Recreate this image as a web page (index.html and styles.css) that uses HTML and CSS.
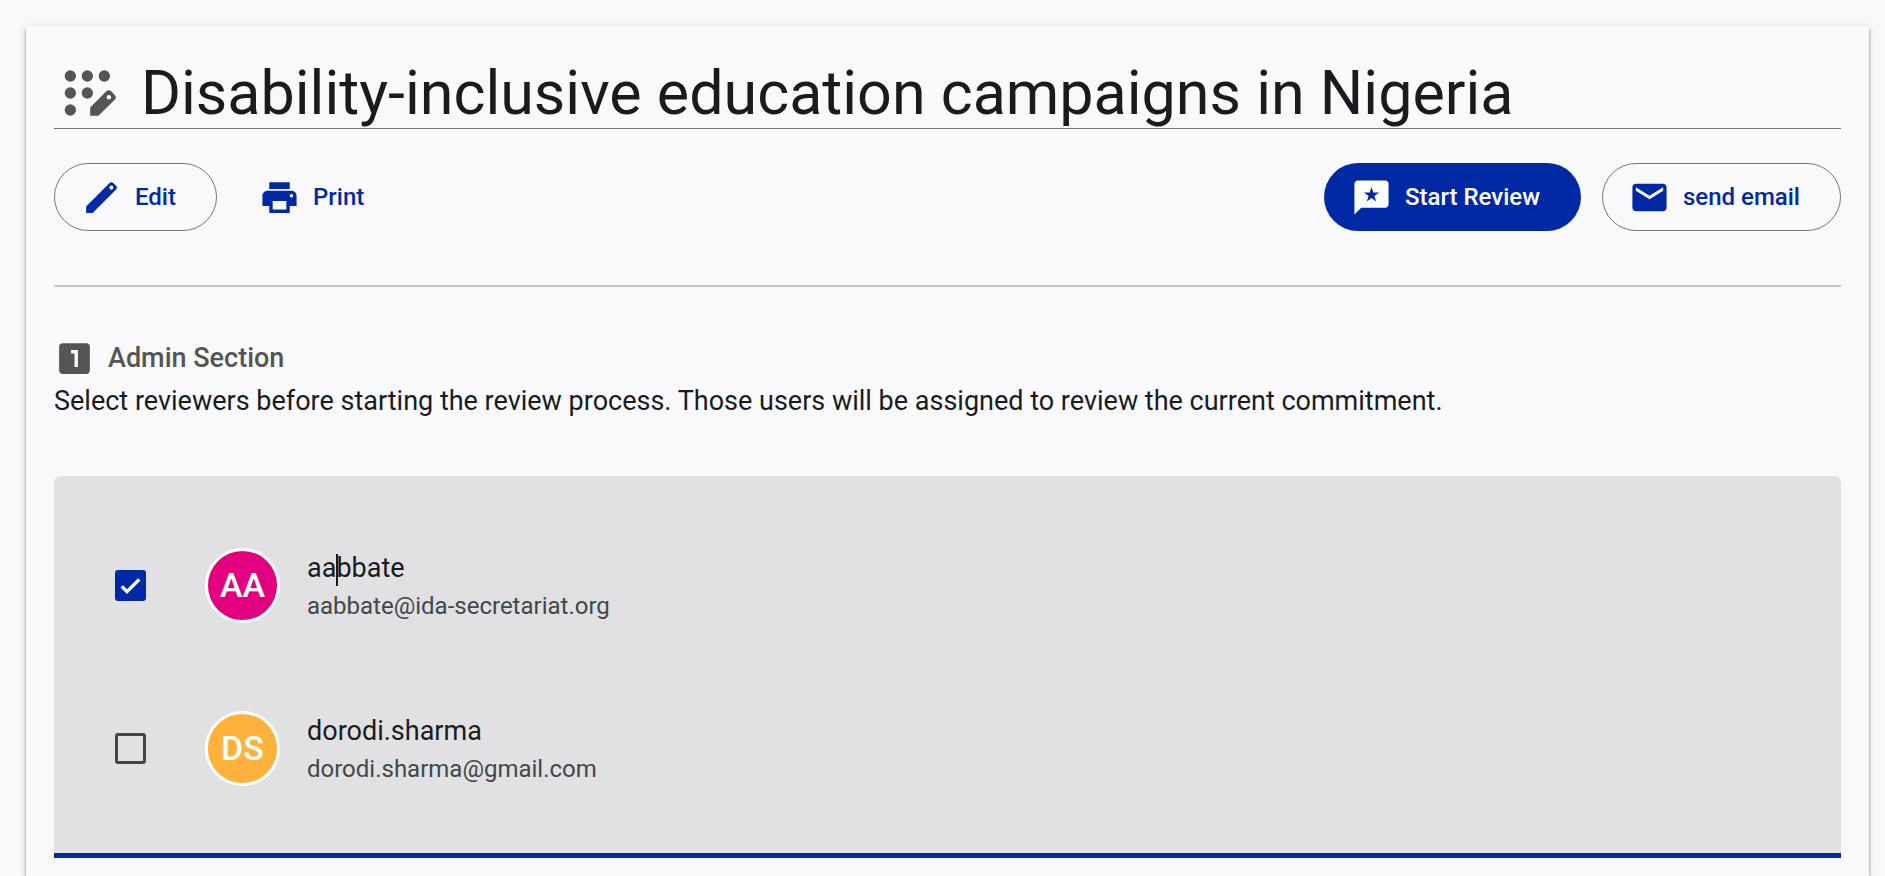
FILE: index.html
```html
<!DOCTYPE html>
<html lang="en">
<head>
  <meta charset="UTF-8">
  <meta name="viewport" content="width=device-width, initial-scale=1">
  <title>Disability-inclusive education campaigns in Nigeria</title>
  <link rel="stylesheet" href="styles.css">
</head>
<body>
  <main class="card">
    <h1 class="title">
      <svg class="title-icon" viewBox="0 -2 24 24" aria-hidden="true">
        <circle cx="4" cy="4" r="2"/>
        <circle cx="10" cy="4" r="2"/>
        <circle cx="16" cy="4" r="2"/>
        <circle cx="4" cy="10" r="2"/>
        <circle cx="10" cy="10" r="2"/>
        <circle cx="4" cy="16" r="2"/>
        <path fill-rule="evenodd" d="M11 15.1V18h2.9l5.7-5.5c.6-.6.6-1.3 0-1.900l-1.100-1.100c-.6-.6-1.300-.6-1.900 0zM17.600 10.700a.8.8 0 1 1 0 1.600.8.8 0 0 1 0-1.600z"/>
      </svg>
      <span>Disability-inclusive education campaigns in Nigeria</span>
    </h1>

    <div class="actions">
      <button type="button" class="btn btn-outlined">
        <svg class="icon" viewBox="0 0 24 24" aria-hidden="true">
          <path fill-rule="evenodd" d="M3 17.2V21h3.8L20.4 7.4c.8-.8.8-1.6 0-2.4l-1.4-1.4c-.8-.8-1.6-.8-2.4 0zM17.8 5a1.2 1.2 0 1 1 0 2.4 1.2 1.2 0 0 1 0-2.4z"/>
        </svg>
        Edit
      </button>
      <button type="button" class="btn btn-text">
        <svg class="icon" viewBox="0 0 24 24" aria-hidden="true">
          <path d="M19 8H5c-1.66 0-3 1.34-3 3v6h4v4h12v-4h4v-6c0-1.66-1.34-3-3-3zm-3 11H8v-5h8v5zm3-7c-.55 0-1-.45-1-1s.45-1 1-1 1 .45 1 1-.45 1-1 1zm-1-9H6v4h12V3z"/>
        </svg>
        Print
      </button>
      <span class="spacer"></span>
      <button type="button" class="btn btn-filled">
        <svg class="icon" viewBox="0 0 24 24" aria-hidden="true">
          <path fill-rule="evenodd" d="M20 2H4c-1.1 0-2 .9-2 2v18l4-4h14c1.1 0 2-.9 2-2V4c0-1.1-.9-2-2-2zM12 5.8l1.06 3.24 3.41.01-2.76 2.01 1.05 3.24L12 12.3l-2.76 2 1.05-3.24-2.76-2.01 3.41-.01z"/>
        </svg>
        Start Review
      </button>
      <button type="button" class="btn btn-outlined">
        <svg class="icon" viewBox="0 0 24 24" aria-hidden="true">
          <path d="M20 4H4c-1.1 0-1.99.9-1.99 2L2 18c0 1.1.9 2 2 2h16c1.1 0 2-.9 2-2V6c0-1.1-.9-2-2-2zm0 4l-8 5-8-5V6l8 5 8-5v2z"/>
        </svg>
        send email
      </button>
    </div>

    <hr class="divider">

    <h2 class="section-title">
      <svg class="icon" viewBox="0 0 24 24" aria-hidden="true">
        <path d="M19 3H5c-1.1 0-2 .9-2 2v14c0 1.1.9 2 2 2h14c1.1 0 2-.9 2-2V5c0-1.1-.9-2-2-2zm-5 14h-2V9h-2V7h4v10z"/>
      </svg>
      Admin Section
    </h2>
    <p class="description">Select reviewers before starting the review process. Those users will be assigned to review the current commitment.</p>

    <div class="reviewers">
      <label class="reviewer">
        <input type="checkbox" class="check" checked>
        <span class="avatar avatar-pink">AA</span>
        <span class="who">
          <span class="name">aa<span class="caret"></span>bbate</span>
          <span class="email">aabbate@ida-secretariat.org</span>
        </span>
      </label>
      <label class="reviewer">
        <input type="checkbox" class="check">
        <span class="avatar avatar-orange">DS</span>
        <span class="who">
          <span class="name">dorodi.sharma</span>
          <span class="email">dorodi.sharma@gmail.com</span>
        </span>
      </label>
    </div>
  </main>
</body>
</html>
```

FILE: styles.css
```css
* {
  box-sizing: border-box;
}
body {
  margin: 0;
  padding: 26px 16px 0 26px;
  font-family: Roboto, sans-serif;
  background: #f9f9fc;
  color: #191c1e;
}
.card {
  min-height: calc(100vh - 26px);
  padding: 28px 28px 0;
  box-shadow: 0 3px 3px rgba(0,0,0,0.4), 0 2px 8px rgba(0,0,0,0.14);
}
.title {
  display: flex;
  align-items: center;
  gap: 14px;
  margin: 0 0 34px;
  padding: 4px 0 0 5px;
  border-bottom: 1px solid #70787d;
  font-size: 61px;
  font-weight: 400;
  line-height: 70px;
}
.title-icon {
  width: 68px;
  height: 68px;
  fill: #555;
}
.actions {
  display: flex;
  align-items: center;
  gap: 21px;
}
.spacer {
  flex: 1;
}
.btn {
  display: inline-flex;
  align-items: center;
  gap: 13px;
  height: 68px;
  padding: 0 40px 0 26px;
  border: 1px solid transparent;
  border-radius: 34px;
  background: transparent;
  color: #0029a5;
  font-family: Roboto, sans-serif;
  font-size: 24px;
  font-weight: 500;
  cursor: pointer;
}
.btn-outlined {
  border-color: #70787d;
}
.btn-text {
  padding: 0 20px;
}
.btn-filled {
  background: #0029a5;
  color: #fff;
}
.icon {
  width: 41px;
  height: 41px;
  fill: currentColor;
}
.divider {
  height: 2px;
  margin: 54px 0 51px;
  border: 0;
  background: #bfc8cd;
}
.section-title {
  display: flex;
  align-items: center;
  gap: 13px;
  margin: 0;
  color: #555;
  font-size: 27px;
  font-weight: 500;
  line-height: 41px;
}
.description {
  margin: 2px 0 54px;
  font-size: 27px;
  line-height: 41px;
}
.reviewers {
  padding: 28px 54px 23px;
  background: #e1e1e3;
  border-bottom: 5px solid #0029a5;
  border-radius: 7px 7px 0 0;
}
.reviewer {
  display: flex;
  align-items: center;
  height: 163px;
}
.check {
  appearance: none;
  width: 31px;
  height: 31px;
  margin: 0 59px 0 7px;
  border: 3px solid #40484c;
  border-radius: 3px;
}
.check:checked {
  border-color: #0029a5;
  background: #0029a5 url("data:image/svg+xml,%3Csvg xmlns='http://www.w3.org/2000/svg' viewBox='0 0 24 24'%3E%3Cpath d='M2 13l6 6L22 5' fill='none' stroke='white' stroke-width='4'/%3E%3C/svg%3E") center / 21px no-repeat;
}
.avatar {
  width: 75px;
  height: 75px;
  margin-right: 27px;
  border: 3px solid #fff;
  border-radius: 50%;
  color: #fff;
  font-size: 34px;
  font-weight: 500;
  line-height: 69px;
  text-align: center;
}
.avatar-pink {
  background: #e20080;
}
.avatar-orange {
  background: #ffb23b;
}
.who {
  display: flex;
  flex-direction: column;
}
.name {
  font-size: 27px;
  line-height: 41px;
}
.caret {
  display: inline-block;
  width: 2px;
  height: 32px;
  margin-right: -2px;
  background: #191c1e;
  vertical-align: middle;
}
.email {
  color: #40484c;
  font-size: 24px;
  line-height: 34px;
}
```
